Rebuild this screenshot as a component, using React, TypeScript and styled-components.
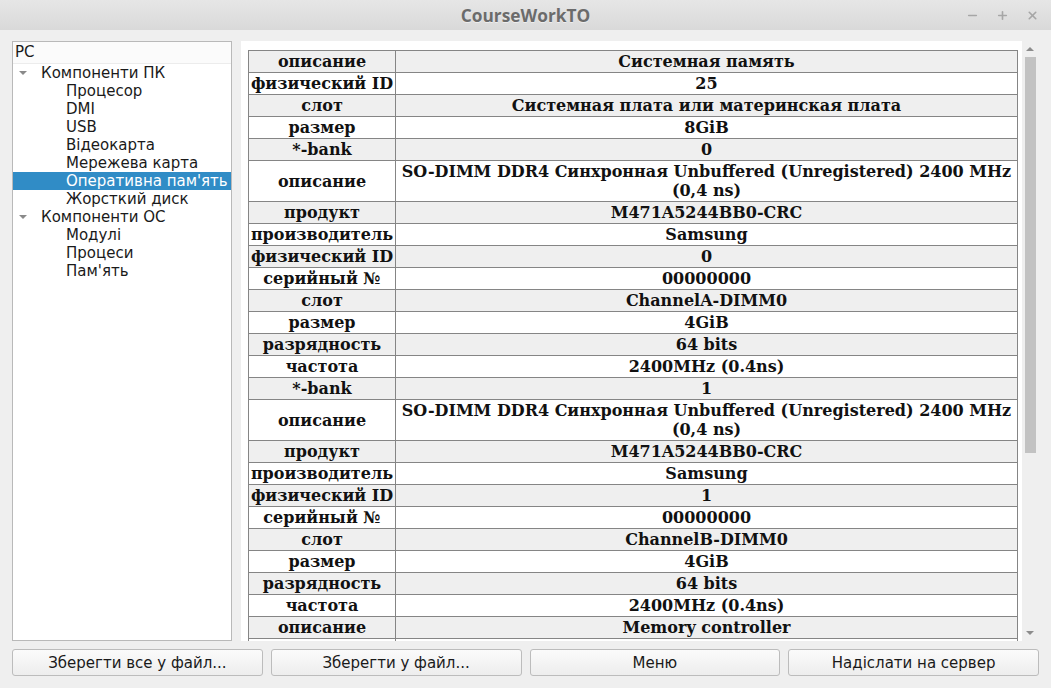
import styled, { createGlobalStyle } from "styled-components";
import { Minus, Plus, X } from "lucide-react";

const GlobalStyle = createGlobalStyle`
  html, body {
    margin: 0;
    padding: 0;
    background: #efefef;
  }
  body {
    font-family: "DejaVu Sans", "Noto Sans", sans-serif;
  }
`;

const SWindow = styled.div`
  display: flex;
  flex-direction: column;
  width: 1051px;
  height: 688px;
  background: #efefef;
  overflow: hidden;
`;

const STitleBar = styled.div`
  position: relative;
  height: 30px;
  flex: none;
  display: flex;
  align-items: center;
  justify-content: center;
  background: linear-gradient(#e6e6e6, #d9d9d9);
`;

const STitle = styled.div`
  font-family: "Open Sans", "Noto Sans", sans-serif;
  font-weight: 700;
  font-size: 17.3px;
  color: #6b6b6b;
  text-shadow: 0 1px 0 rgba(255, 255, 255, 0.5);
`;

const SControls = styled.div`
  position: absolute;
  right: 12px;
  top: 0;
  height: 30px;
  display: flex;
  align-items: center;
  gap: 17px;
  color: #a6a6a6;
`;

const SBody = styled.div`
  flex: 1;
  display: flex;
  flex-direction: column;
  padding: 11px 11px 12px 12px;
  gap: 8px;
  min-height: 0;
`;

const SMain = styled.div`
  flex: 1;
  display: flex;
  gap: 9px;
  min-height: 0;
`;

const STree = styled.div`
  width: 220px;
  flex: none;
  background: #fff;
  border: 1px solid #b9b9b9;
  box-sizing: border-box;
  font-size: 15px;
  color: #1a1a1a;
`;

const STreeHeader = styled.div`
  height: 21px;
  line-height: 21px;
  padding-left: 2px;
  background: #fbfbfb;
  border-bottom: 1px solid #ececec;
`;

const STreeRow = styled.div<{ $level: number; $selected?: boolean }>`
  display: flex;
  align-items: center;
  height: 18px;
  padding-left: ${(p) => (p.$level === 0 ? 6 : 53)}px;
  background: ${(p) => (p.$selected ? "#308cc6" : "transparent")};
  color: ${(p) => (p.$selected ? "#fff" : "#1a1a1a")};
  white-space: nowrap;
`;

const SArrow = styled.span`
  width: 0;
  height: 0;
  border-left: 4px solid transparent;
  border-right: 4px solid transparent;
  border-top: 4px solid #8a8a8a;
  margin-right: 14px;
`;

const SScrollArea = styled.div`
  flex: 1;
  display: flex;
  min-width: 0;
  background: #fff;
`;

const SViewport = styled.div`
  flex: 1;
  overflow: hidden;
  padding: 9px 7px 0 7px;
`;

const STable = styled.table`
  border-collapse: collapse;
  width: 770px;
  table-layout: fixed;
  font-family: "DejaVu Serif", "Liberation Serif", serif;
  font-weight: 700;
  font-size: 16px;
  color: #111;
`;

const SRow = styled.tr<{ $shade: boolean }>`
  background: ${(p) => (p.$shade ? "#efefef" : "#fff")};
`;

const SCell = styled.td<{ $key?: boolean }>`
  border: 1px solid #858585;
  text-align: center;
  line-height: 19px;
  padding: 1px ${(p) => (p.$key ? 0 : 2)}px;
  white-space: ${(p) => (p.$key ? "nowrap" : "normal")};
`;

const SScrollbar = styled.div`
  width: 16px;
  flex: none;
  display: flex;
  flex-direction: column;
  align-items: center;
  background: #efefef;
  padding-right: 2px;
`;

const SScrollArrow = styled.div<{ $down?: boolean }>`
  height: 16px;
  flex: none;
  display: flex;
  align-items: center;
  justify-content: center;

  &::before {
    content: "";
    width: 0;
    height: 0;
    border-left: 4px solid transparent;
    border-right: 4px solid transparent;
    ${(p) =>
      p.$down ? "border-top: 4px solid #8c8c8c;" : "border-bottom: 4px solid #8c8c8c;"}
  }
`;

const STrack = styled.div`
  flex: 1;
  width: 11px;
`;

const SThumb = styled.div`
  width: 11px;
  background: #c2c2c2;
`;

const SButtons = styled.div`
  display: grid;
  grid-template-columns: repeat(4, 1fr);
  gap: 8px;
  padding-right: 1px;
`;

const SButton = styled.button`
  height: 27px;
  border: 1px solid #bcbcbc;
  border-radius: 3px;
  background: linear-gradient(#fbfbfb, #ededed);
  font-family: "DejaVu Sans", "Noto Sans", sans-serif;
  font-size: 15px;
  color: #1a1a1a;
  padding: 0;
`;

const tree = [
  { label: "Компоненти ПК", level: 0 },
  { label: "Процесор", level: 1 },
  { label: "DMI", level: 1 },
  { label: "USB", level: 1 },
  { label: "Відеокарта", level: 1 },
  { label: "Мережева карта", level: 1 },
  { label: "Оперативна пам'ять", level: 1, selected: true },
  { label: "Жорсткий диск", level: 1 },
  { label: "Компоненти ОС", level: 0 },
  { label: "Модулі", level: 1 },
  { label: "Процеси", level: 1 },
  { label: "Пам'ять", level: 1 },
];

const DIMM = "SO-DIMM DDR4 Синхронная Unbuffered (Unregistered) 2400 MHz (0,4 ns)";

const rows: [string, string][] = [
  ["описание", "Системная память"],
  ["физический ID", "25"],
  ["слот", "Системная плата или материнская плата"],
  ["размер", "8GiB"],
  ["*-bank", "0"],
  ["описание", DIMM],
  ["продукт", "M471A5244BB0-CRC"],
  ["производитель", "Samsung"],
  ["физический ID", "0"],
  ["серийный №", "00000000"],
  ["слот", "ChannelA-DIMM0"],
  ["размер", "4GiB"],
  ["разрядность", "64 bits"],
  ["частота", "2400MHz (0.4ns)"],
  ["*-bank", "1"],
  ["описание", DIMM],
  ["продукт", "M471A5244BB0-CRC"],
  ["производитель", "Samsung"],
  ["физический ID", "1"],
  ["серийный №", "00000000"],
  ["слот", "ChannelB-DIMM0"],
  ["размер", "4GiB"],
  ["разрядность", "64 bits"],
  ["частота", "2400MHz (0.4ns)"],
  ["описание", "Memory controller"],
  ["физический ID", "1"],
];

const App = () => {
  return (
    <SWindow>
      <GlobalStyle />
      <STitleBar>
        <STitle>CourseWorkTO</STitle>
        <SControls>
          <Minus size={13} strokeWidth={3} />
          <Plus size={13} strokeWidth={3} />
          <X size={13} strokeWidth={3} />
        </SControls>
      </STitleBar>
      <SBody>
        <SMain>
          <STree>
            <STreeHeader>PC</STreeHeader>
            {tree.map((item, i) => (
              <STreeRow key={i} $level={item.level} $selected={item.selected}>
                {item.level === 0 && <SArrow />}
                {item.label}
              </STreeRow>
            ))}
          </STree>
          <SScrollArea>
            <SViewport>
              <STable>
                <colgroup>
                  <col style={{ width: 147 }} />
                  <col />
                </colgroup>
                <tbody>
                  {rows.map(([k, v], i) => (
                    <SRow key={i} $shade={i % 2 === 0}>
                      <SCell $key>{k}</SCell>
                      <SCell>{v}</SCell>
                    </SRow>
                  ))}
                </tbody>
              </STable>
            </SViewport>
            <SScrollbar>
              <SScrollArrow />
              <STrack>
                <SThumb style={{ height: 396 }} />
              </STrack>
              <SScrollArrow $down />
            </SScrollbar>
          </SScrollArea>
        </SMain>
        <SButtons>
          <SButton>Зберегти все у файл...</SButton>
          <SButton>Зберегти у файл...</SButton>
          <SButton>Меню</SButton>
          <SButton>Надіслати на сервер</SButton>
        </SButtons>
      </SBody>
    </SWindow>
  );
};

export default App;
